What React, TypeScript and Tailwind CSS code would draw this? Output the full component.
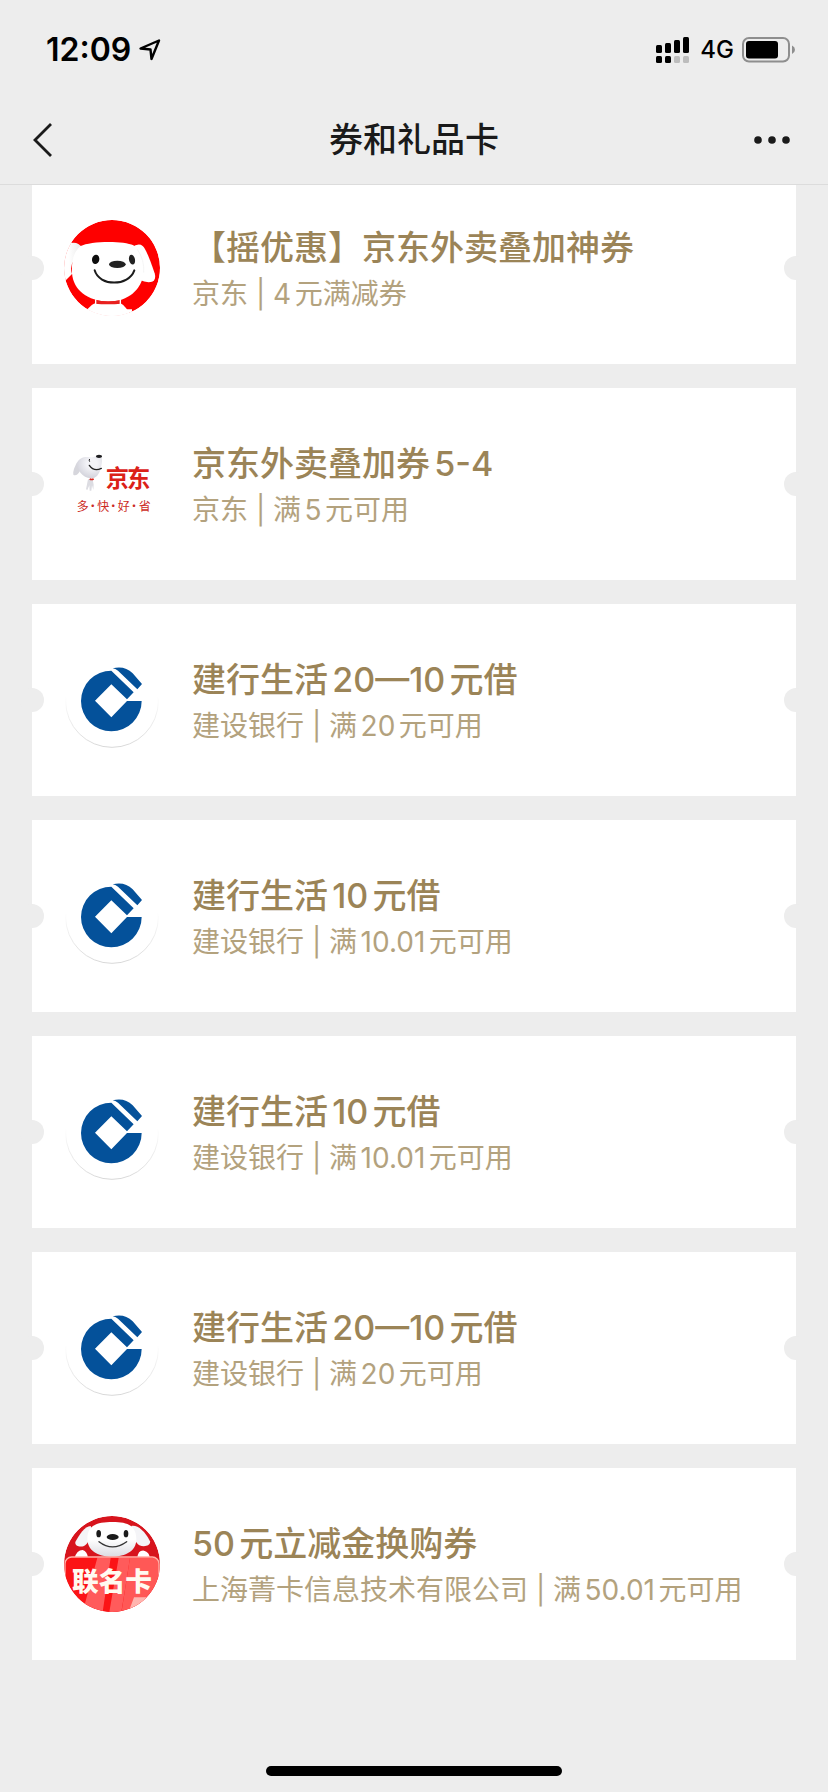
import React from 'react';

type Logo = 'joy' | 'jd' | 'ccb' | 'joint';

interface Coupon {
  id: number;
  logo: Logo;
  title: string;
  merchant: string;
  rule: string;
}

const coupons: Coupon[] = [
  { id: 1, logo: 'joy', title: '【摇优惠】京东外卖叠加神券', merchant: '京东', rule: '4元满减券' },
  { id: 2, logo: 'jd', title: '京东外卖叠加券5-4', merchant: '京东', rule: '满5元可用' },
  { id: 3, logo: 'ccb', title: '建行生活20—10元借', merchant: '建设银行', rule: '满20元可用' },
  { id: 4, logo: 'ccb', title: '建行生活10元借', merchant: '建设银行', rule: '满10.01元可用' },
  { id: 5, logo: 'ccb', title: '建行生活10元借', merchant: '建设银行', rule: '满10.01元可用' },
  { id: 6, logo: 'ccb', title: '建行生活20—10元借', merchant: '建设银行', rule: '满20元可用' },
  { id: 7, logo: 'joint', title: '50元立减金换购券', merchant: '上海菁卡信息技术有限公司', rule: '满50.01元可用' },
];

const JoyLogo = () => (
  <svg viewBox="42 30 288 288" className="h-24 w-24 shrink-0" aria-hidden>
    <defs>
      <clipPath id="joy-clip">
        <circle cx="186" cy="174" r="144" />
      </clipPath>
      <linearGradient id="joy-ear" x1="0" x2="1">
        <stop offset="0.4" stopColor="#fff" />
        <stop offset="1" stopColor="#e9e9e9" />
      </linearGradient>
    </defs>
    <g clipPath="url(#joy-clip)">
      <circle cx="186" cy="174" r="144" fill="#fe0000" />
      <path d="M30 110 L62 99 Q84 94 96 112 L72 150 Q58 170 66 192 L48 210 L30 214 Z" fill="url(#joy-ear)" />
      <path d="M245 112 Q266 98 278 108 Q290 118 314 190 Q320 212 302 216 Q286 218 270 210 Z" fill="#fff" />
      <path d="M96 322 L112 298 Q122 284 137 278 L210 278 Q228 288 246 322 Z" fill="#fff" />
      <path d="M66 190 C64 150 72 124 92 108 C119 93 221 91 250 106 C272 120 284 150 281 188 C276 238 234 274 176 275 C112 274 70 240 66 190 Z" fill="#fff" />
      <path d="M281 188 Q284 150 262 118" fill="none" stroke="#f0f0f0" strokeWidth="2" />
      <path d="M134 270 Q174 278 214 270 L214 281 Q174 285 134 281 Z" fill="#e8201f" />
      <path d="M137 268 V282 M211 268 V282" stroke="#fff" strokeWidth="4" />
      <path d="M112 298 H246 V330 H96 Z" fill="#fff" />
    </g>
    <ellipse cx="137" cy="148" rx="11" ry="14" transform="rotate(10 137 148)" fill="#0d0d0d" />
    <ellipse cx="246" cy="149" rx="9" ry="15" transform="rotate(-12 246 149)" fill="#222" />
    <ellipse cx="202" cy="163" rx="25" ry="11" fill="#222" />
    <path d="M134 181 C148 230 236 230 253 181" fill="none" stroke="#1c1c1c" strokeWidth="6" strokeLinecap="round" />
  </svg>
);

const JdLogo = () => (
  <svg viewBox="42 18 288 288" className="h-24 w-24 shrink-0 font-['Noto_Sans_CJK_SC',sans-serif]" aria-hidden>
    <defs>
      <radialGradient id="jd-head" cx="0.6" cy="0.35" r="0.7">
        <stop offset="0.3" stopColor="#f3f3f7" />
        <stop offset="1" stopColor="#cfcfd8" />
      </radialGradient>
    </defs>
    <path d="M114 148 L108 178 L112 180 L118 166 L119 182 L124 182 L126 166 L130 180 L131 164 L128 148 Z" fill="#dcdce2" />
    <path d="M82 96 C76 106 68 122 70 134 C76 140 86 132 90 122 Z" fill="#d6d6dc" />
    <path d="M81 98 C88 84 104 78 120 82 C132 84 140 76 150 76 C160 84 156 104 150 122 C144 138 134 146 122 145 C98 143 80 120 81 98 Z" fill="url(#jd-head)" />
    <path d="M119 147 Q125 150 131 147" fill="none" stroke="#d9251c" strokeWidth="5" />
    <ellipse cx="147" cy="79" rx="9" ry="5" fill="#1d1d1f" />
    <path d="M119 87 Q116 90 119 95" fill="none" stroke="#222" strokeWidth="3" />
    <path d="M118 106 Q132 126 154 115" fill="none" stroke="#222" strokeWidth="4" strokeLinecap="round" />
    <text x="202 266" y="170" textAnchor="middle" fontSize="70" fontWeight="700" fill="#db2118">京东</text>
    <text x="98 128 160 190 221 252 284" y="244" textAnchor="middle" fontSize="36" fontWeight="400" fill="#cc2a24">多·快·好·省</text>
  </svg>
);

const CcbLogo = () => (
  <svg viewBox="42 6 288 288" className="h-24 w-24 shrink-0" aria-hidden>
    <defs>
      <linearGradient id="ccb-rim" x1="0" y1="0" x2="0" y2="1">
        <stop offset="0.45" stopColor="#fff" />
        <stop offset="1" stopColor="#d8d8d8" />
      </linearGradient>
    </defs>
    <circle cx="186" cy="153" r="139" fill="#fff" stroke="url(#ccb-rim)" strokeWidth="3" />
    <path d="M275 153 A91 91 0 1 1 184 62 L251 127 L231 148 L184 103 L135 152 L184 202 L231 153 Z" fill="#04519a" />
    <path d="M188 55 C212 49 232 54 248 70 L276 102 L262 118 L204 62 Q196 56 188 55 Z" fill="#04519a" />
  </svg>
);

const JointLogo = () => (
  <svg viewBox="42 48 288 288" className="h-24 w-24 shrink-0 font-['Noto_Sans_CJK_SC',sans-serif]" aria-hidden>
    <defs>
      <clipPath id="joint-clip">
        <circle cx="186" cy="192" r="144" />
      </clipPath>
      <linearGradient id="joint-head" x1="0" y1="0" x2="0" y2="1">
        <stop offset="0.5" stopColor="#fff" />
        <stop offset="1" stopColor="#dcdce2" />
      </linearGradient>
    </defs>
    <g clipPath="url(#joint-clip)">
      <circle cx="186" cy="192" r="144" fill="#d7141d" />
      <path d="M122 78 C104 78 88 104 76 126 C74 140 92 142 102 138 C114 132 122 112 128 94 Z" fill="#f4f4f7" />
      <path d="M244 78 C262 74 284 92 300 124 C302 138 282 142 268 136 C256 128 250 112 244 94 Z" fill="#f4f4f7" />
      <path d="M112 116 C112 74 144 66 188 66 C232 66 258 76 259 116 C260 152 228 170 186 170 C142 170 112 150 112 116 Z" fill="url(#joint-head)" />
      <path d="M74 174 Q80 150 98 150 Q112 154 114 174 Z M262 174 Q264 150 282 152 Q298 156 300 174 Z" fill="#fff" />
      <rect x="44" y="171" width="284" height="190" rx="20" fill="#fb1416" />
      <path d="M142 173 H182 L158 336 H98 Z M206 173 H240 L228 250 L214 336 H178 Z" fill="#ff5b5b" />
      <path d="M240 173 H308 Q328 173 328 196 V340 H214 L228 250 Z" fill="#ff5856" />
      <path d="M252 292 H330 V340 H234 Z" fill="#ffb5af" />
      <rect x="45" y="171" width="282" height="200" rx="20" fill="none" stroke="#ffb0a8" strokeWidth="4" />
    </g>
    <ellipse cx="146" cy="101" rx="7" ry="11" fill="#1b1b1b" />
    <ellipse cx="228" cy="101" rx="7" ry="11" fill="#1b1b1b" />
    <ellipse cx="188" cy="111" rx="18" ry="9" fill="#1b1b1b" />
    <path d="M147 125 Q187 156 230 125" fill="none" stroke="#333" strokeWidth="4" strokeLinecap="round" />
    <text x="186" y="272" textAnchor="middle" fontSize="80" fontWeight="900" fill="#fffaf0">联名卡</text>
  </svg>
);

const logos: Record<Logo, React.FC> = {
  joy: JoyLogo,
  jd: JdLogo,
  ccb: CcbLogo,
  joint: JointLogo,
};

const StatusBar = () => (
  <div className="flex h-24 items-center justify-between pl-[46px] pr-8 pt-1">
    <div className="flex items-center gap-2">
      <span className="text-[32px] font-semibold leading-none text-black">12:09</span>
      <svg viewBox="0 0 22 22" className="h-[22px] w-[22px]" aria-hidden>
        <path d="M1.500 9.500 L20 1.500 L12.500 20 L11.500 10.500 Z" fill="none" stroke="#000" strokeWidth="2.4" strokeLinejoin="round" />
      </svg>
    </div>
    <div className="flex items-center gap-2">
      <svg viewBox="0 0 36 26" className="h-[26px] w-9" aria-hidden>
        <rect x="0" y="8" width="6" height="8" rx="1.5" />
        <rect x="9" y="6" width="6" height="10" rx="1.5" />
        <rect x="18" y="3" width="6" height="13" rx="1.5" />
        <rect x="27" y="0" width="6" height="16" rx="1.5" />
        <rect x="0" y="19" width="6" height="7" rx="1.5" />
        <rect x="9" y="19" width="6" height="7" rx="1.5" />
        <rect x="18" y="19" width="6" height="7" rx="1.5" fill="#bdbdbd" />
        <rect x="27" y="19" width="6" height="7" rx="1.5" fill="#bdbdbd" />
      </svg>
      <span className="text-2xl font-medium leading-none text-black">4G</span>
      <svg viewBox="0 0 54 26" className="h-[26px] w-[54px]" aria-hidden>
        <rect x="1" y="1" width="46" height="23.5" rx="6" fill="none" stroke="#8e8e8e" strokeWidth="2" />
        <rect x="4" y="4" width="32" height="17.5" rx="3" />
        <path d="M50 8.500 Q53 10 53 12.700 Q53 15.500 50 17 Z" fill="#8e8e8e" />
      </svg>
    </div>
  </div>
);

const NavBar = () => (
  <nav className="flex h-[88px] items-center justify-between px-8">
    <button type="button" aria-label="返回" className="flex h-12 w-12 items-center">
      <svg viewBox="0 0 24 36" className="h-9 w-6" fill="none" stroke="#1a1a1a" strokeWidth="2.8" aria-hidden>
        <path d="M19 2 L3 18 L19 34" />
      </svg>
    </button>
    <h1 className="text-[34px] font-medium leading-none text-[#1a1a1a]">券和礼品卡</h1>
    <button type="button" aria-label="更多" className="flex h-12 w-12 items-center justify-end">
      <svg viewBox="0 0 44 12" className="h-3 w-11" fill="#1a1a1a" aria-hidden>
        <circle cx="6" cy="6" r="3.8" />
        <circle cx="20" cy="6" r="3.8" />
        <circle cx="34" cy="6" r="3.8" />
      </svg>
    </button>
  </nav>
);

const CouponCard: React.FC<{ coupon: Coupon }> = ({ coupon }) => {
  const Logo = logos[coupon.logo];

  return (
    <li className="relative bg-white">
      <a href="#" className="flex h-48 items-center gap-8 px-8">
        <Logo />
        <div className="whitespace-nowrap pt-1.5 [text-autospace:normal]">
          <h2 className="text-[34px] font-medium leading-[46px] text-[#9b8457]">{coupon.title}</h2>
          <p className="text-[28px] leading-[46px] text-[#b3a27e]">
            {coupon.merchant} | {coupon.rule}
          </p>
        </div>
      </a>
      <span className="absolute -left-3 top-1/2 h-6 w-6 -translate-y-1/2 rounded-full bg-[#ededed]" aria-hidden />
      <span className="absolute -right-3 top-1/2 h-6 w-6 -translate-y-1/2 rounded-full bg-[#ededed]" aria-hidden />
    </li>
  );
};

const App: React.FC = () => (
  <div className="flex min-h-screen flex-col bg-[#ededed] font-[Inter,'Noto_Sans_CJK_SC',sans-serif]">
    <header className="sticky top-0 z-10 border-b border-[#dcdcdc] bg-[#ededed]">
      <StatusBar />
      <NavBar />
    </header>
    {/* list is scrolled a little under the header */}
    <main className="-mt-[13px] flex-1 px-8">
      <ul className="flex flex-col gap-6">
        {coupons.map((coupon) => (
          <CouponCard key={coupon.id} coupon={coupon} />
        ))}
      </ul>
    </main>
    <footer className="flex justify-center pb-4">
      <div className="h-2.5 w-[296px] rounded-full bg-black" />
    </footer>
  </div>
);

export default App;
